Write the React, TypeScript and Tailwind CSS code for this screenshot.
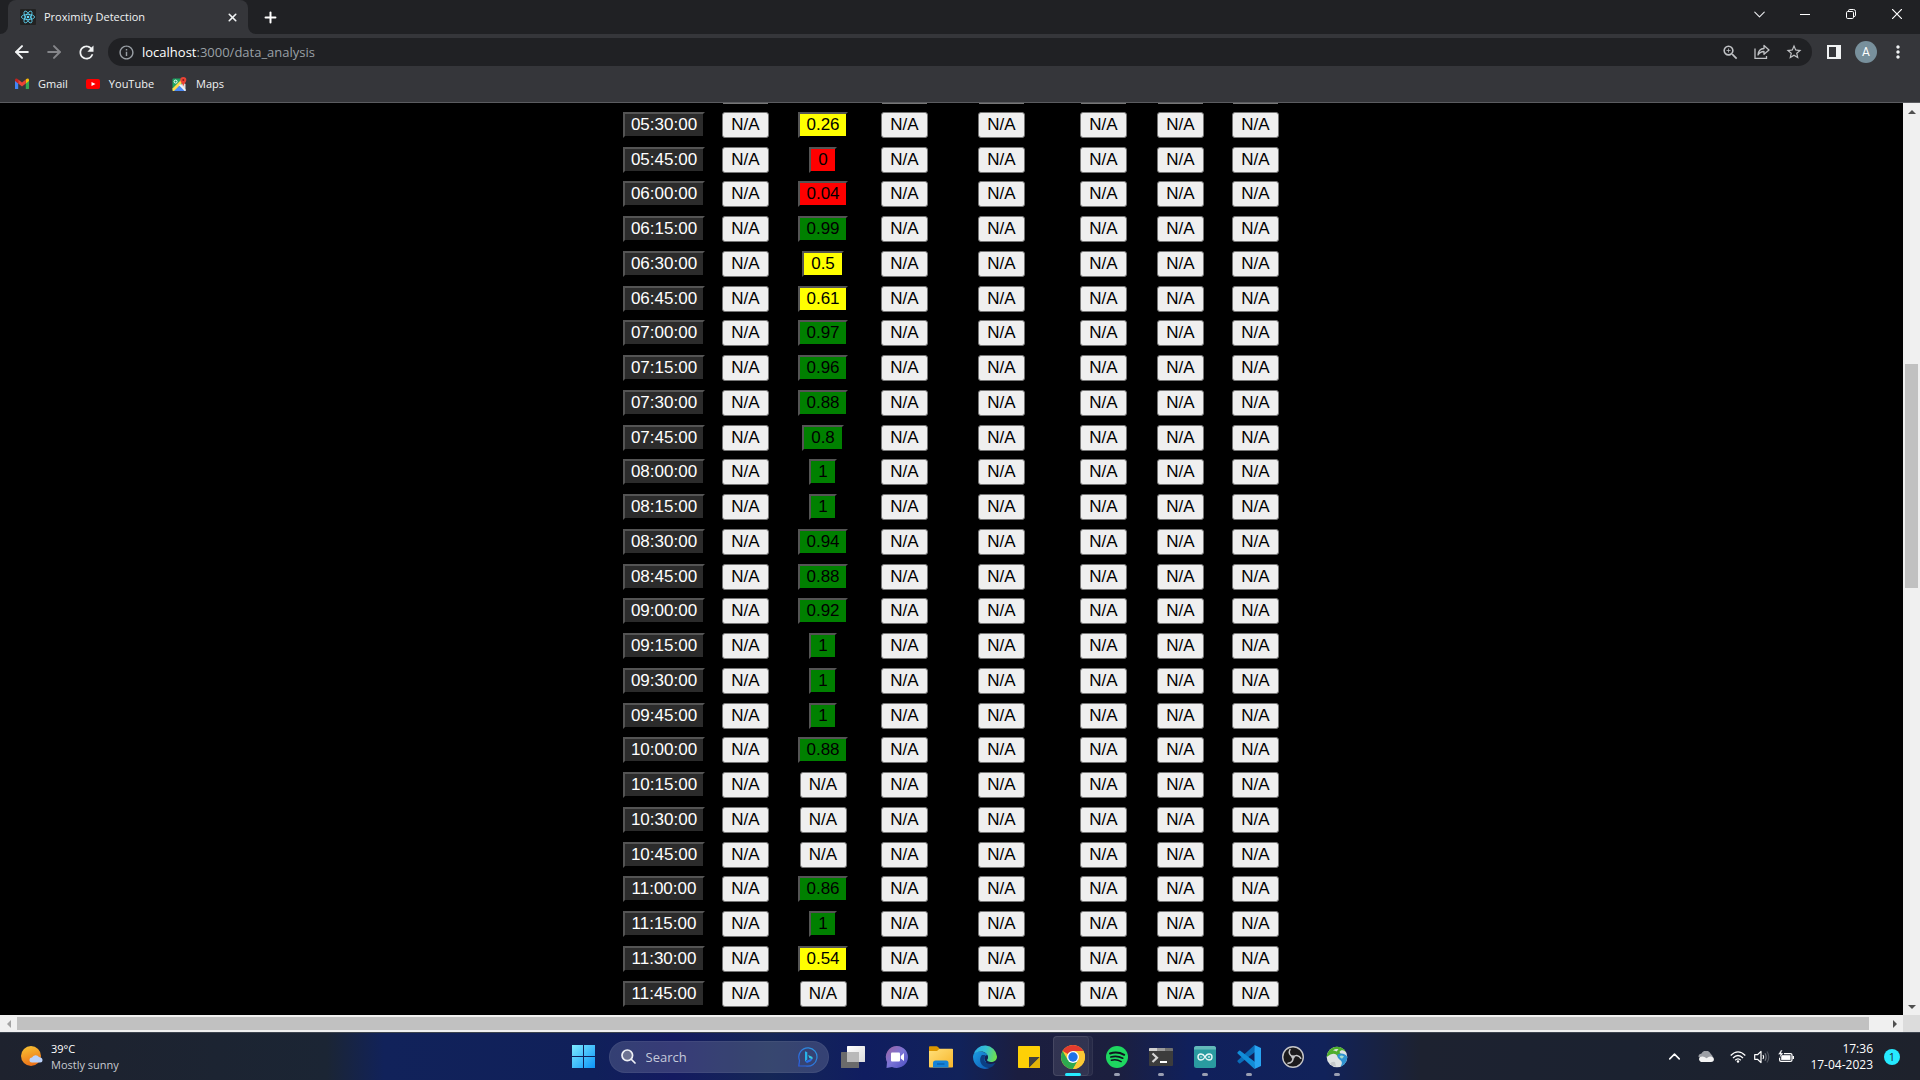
import React from "react";
import { ArrowLeft, ArrowRight, ChevronDown, ChevronUp, Plus, X } from "lucide-react";
import { MdRefresh, MdInfoOutline, MdZoomIn, MdStarBorder, MdMoreVert } from "react-icons/md";

type Reading = { time: string; value: string };

const readings: Reading[] = [
  { time: "05:30:00", value: "0.26" },
  { time: "05:45:00", value: "0" },
  { time: "06:00:00", value: "0.04" },
  { time: "06:15:00", value: "0.99" },
  { time: "06:30:00", value: "0.5" },
  { time: "06:45:00", value: "0.61" },
  { time: "07:00:00", value: "0.97" },
  { time: "07:15:00", value: "0.96" },
  { time: "07:30:00", value: "0.88" },
  { time: "07:45:00", value: "0.8" },
  { time: "08:00:00", value: "1" },
  { time: "08:15:00", value: "1" },
  { time: "08:30:00", value: "0.94" },
  { time: "08:45:00", value: "0.88" },
  { time: "09:00:00", value: "0.92" },
  { time: "09:15:00", value: "1" },
  { time: "09:30:00", value: "1" },
  { time: "09:45:00", value: "1" },
  { time: "10:00:00", value: "0.88" },
  { time: "10:15:00", value: "N/A" },
  { time: "10:30:00", value: "N/A" },
  { time: "10:45:00", value: "N/A" },
  { time: "11:00:00", value: "0.86" },
  { time: "11:15:00", value: "1" },
  { time: "11:30:00", value: "0.54" },
  { time: "11:45:00", value: "N/A" },
];

function toneOf(value: string) {
  const n = Number(value);
  if (n < 0.25) return "bg-[#ff0000]";
  if (n < 0.75) return "bg-[#ffff00]";
  return "bg-[#008000]";
}

function widthOf(value: string) {
  if (value.length === 1) return "w-7";
  if (value.length === 3) return "w-[42px]";
  return "w-[50px]";
}

function ValueButton({ value }: { value: string }) {
  if (value === "N/A") {
    return (
      <button className="mx-auto flex h-[26px] w-[47px] items-center justify-center rounded-[3px] border border-[#767676] bg-[#efefef] text-[17px] leading-5 text-black">
        N/A
      </button>
    );
  }
  return (
    <button
      className={`mx-auto flex h-[26px] items-center justify-center border-2 border-black text-[17px] leading-5 text-black [border-style:outset] ${toneOf(value)} ${widthOf(value)}`}
    >
      {value}
    </button>
  );
}

function ReadingsTable() {
  return (
    <table className="mx-auto w-[680px] shrink-0 table-fixed border-collapse font-['Liberation_Sans',Arial,sans-serif]">
      <colgroup>
        <col className="w-[100px]" />
        <col className="w-[63px]" />
        <col className="w-[92px]" />
        <col className="w-[71px]" />
        <col className="w-[123px]" />
        <col className="w-[81px]" />
        <col className="w-[73px]" />
        <col className="w-[77px]" />
      </colgroup>
      <tbody>
        {/* Bottom edge of the row that is scrolled out of view */}
        <tr aria-hidden="true" className="h-[5px]">
          <th className="p-0" />
          {[0, 1, 2, 3, 4, 5, 6].map((i) => (
            <td key={i} className="p-0 align-top">
              {i !== 1 && <div className="mx-auto h-px w-[45px] bg-[#767676]" />}
            </td>
          ))}
        </tr>
        {readings.map((r) => (
          <tr key={r.time} className="h-[35px] [&:nth-child(4n+3)]:h-[34px]">
            <th scope="row" className="p-0 pt-1 align-top font-normal">
              <button className="mx-auto flex h-[26px] w-[82px] items-center justify-center border-2 border-black bg-[#2b2b2b] text-[17px] leading-5 text-white [border-style:outset]">
                {r.time}
              </button>
            </th>
            {["N/A", r.value, "N/A", "N/A", "N/A", "N/A", "N/A"].map((v, i) => (
              <td key={i} className="p-0 pt-1 align-top">
                <ValueButton value={v} />
              </td>
            ))}
          </tr>
        ))}
      </tbody>
    </table>
  );
}

function ReactLogo() {
  return (
    <svg viewBox="0 0 16 16" className="size-4">
      <rect width="16" height="16" rx="1" fill="#222" />
      <g fill="none" stroke="#61dafb" strokeWidth="0.8">
        <ellipse cx="8" cy="8" rx="6.6" ry="2.6" />
        <ellipse cx="8" cy="8" rx="6.6" ry="2.6" transform="rotate(60 8 8)" />
        <ellipse cx="8" cy="8" rx="6.6" ry="2.6" transform="rotate(120 8 8)" />
      </g>
      <circle cx="8" cy="8" r="1.3" fill="#61dafb" />
    </svg>
  );
}

function TabStrip() {
  return (
    <div className="flex h-[34px] items-stretch bg-[#202124]">
      <div className="flex w-2 items-end bg-[#35363a]">
        <div className="h-full w-2 rounded-br-lg bg-[#202124]" />
      </div>
      <div className="flex w-60 items-center rounded-t-lg bg-[#35363a] pl-3 pr-2">
        <ReactLogo />
        <span className="ml-2 flex-1 text-[11px] leading-4 text-[#f1f3f4]">Proximity Detection</span>
        <button aria-label="Close tab" className="flex size-4 items-center justify-center text-[#f1f3f4]">
          <X size={13} strokeWidth={3} />
        </button>
      </div>
      <div className="w-2 bg-[#35363a]">
        <div className="h-full rounded-bl-lg bg-[#202124]" />
      </div>
      <button aria-label="New tab" className="flex w-7 items-center justify-center text-white">
        <Plus size={17} strokeWidth={2.8} />
      </button>
      <div className="flex-1" />
      <button aria-label="Search tabs" className="flex w-[46px] items-center justify-center pb-1.5 text-[#e8eaed]">
        <ChevronDown size={19} strokeWidth={1.4} />
      </button>
      <button aria-label="Minimize" className="flex w-[46px] items-center justify-center pb-1.5 text-white">
        <svg viewBox="0 0 10 10" className="size-2.5"><path d="M0 5.5h10" stroke="currentColor" /></svg>
      </button>
      <button aria-label="Restore" className="flex w-[46px] items-center justify-center pb-1.5 text-white">
        <svg viewBox="0 0 10 10" className="size-2.5" fill="none" stroke="currentColor">
          <rect x="0.5" y="2.5" width="7" height="7" rx="1.2" />
          <path d="M2.5 2V1.700Q2.500 .5 3.700 .5H7.500Q9.500 .5 9.500 2.500V6.300Q9.500 7.500 8 7.500" />
        </svg>
      </button>
      <button aria-label="Close" className="flex w-[46px] items-center justify-center pb-1.5 text-white">
        <svg viewBox="0 0 10 10" className="size-2.5"><path d="M0 0L10 10M10 0L0 10" stroke="currentColor" strokeWidth="1.2" /></svg>
      </button>
    </div>
  );
}

function Toolbar() {
  return (
    <div className="flex h-9 items-center bg-[#35363a] pl-1.5 pr-1.5">
      <button aria-label="Back" className="flex w-8 justify-center text-[#f1f3f4]"><ArrowLeft size={20} strokeWidth={2.4} /></button>
      <button aria-label="Forward" className="flex w-8 justify-center text-[#85868a]"><ArrowRight size={20} strokeWidth={2.4} /></button>
      <button aria-label="Reload" className="flex w-8 justify-center text-[#f1f3f4]"><MdRefresh size={21} /></button>
      <div className="ml-1.5 flex h-7 flex-1 items-center rounded-full bg-[#202124] pl-2.5 pr-0.5 text-[#c0c2c5]">
        <MdInfoOutline size={17} className="text-[#9aa0a6]" />
        <div className="ml-[7px] flex-1 text-[13px] leading-5">
          <span className="text-white">localhost</span>
          <span className="text-[#9aa0a6]">:3000/data_analysis</span>
        </div>
        <button aria-label="Zoom" className="flex w-8 justify-center"><MdZoomIn size={19} /></button>
        <button aria-label="Share" className="flex w-8 justify-center">
          <svg viewBox="0 0 16 16" className="size-4" fill="none" stroke="currentColor" strokeWidth="1.3">
            <path d="M1 4.500V14.300H12.500V12" />
            <path d="M4 11C4.300 7 6.500 4.700 10 4.500V1.500L15 6L10 10.300V7.500C7.200 7.500 5.500 8.500 4 11Z" strokeLinejoin="round" />
          </svg>
        </button>
        <button aria-label="Bookmark" className="flex w-8 justify-center"><MdStarBorder size={18} /></button>
      </div>
      <button aria-label="Side panel" className="ml-1.5 flex w-8 justify-center">
        <svg viewBox="0 0 14 14" className="size-3.5"><path d="M0 0H14V14H0ZM2 2V12H9V2Z" fill="#f1f3f4" fillRule="evenodd" /></svg>
      </button>
      <button aria-label="Profile" className="flex w-8 justify-center">
        <span className="flex size-[22px] items-center justify-center rounded-full bg-[#78909c] font-[Roboto,sans-serif] text-xs leading-4 text-white">A</span>
      </button>
      <button aria-label="Menu" className="flex w-8 justify-center text-[#f1f3f4]"><MdMoreVert size={20} /></button>
    </div>
  );
}

function Bookmarks() {
  const link = "flex items-center gap-[9px] text-[11px] leading-4 text-[#f1f3f4]";
  return (
    <nav className="flex h-[33px] items-center gap-[18px] border-b border-[#5b5c60] bg-[#35363a] pb-1 pl-[15px]">
      <a href="#gmail" className={link}>
        <svg viewBox="0 0 14 12" className="h-3 w-3.5">
          <path d="M0 2V10.500Q0 11 .6 11H3.200V4.500Z" fill="#4285f4" />
          <path d="M14 2V10.500Q14 11 13.400 11H10.800V4.500Z" fill="#34a853" />
          <path d="M10.800 1.600V5.500L14 3.100V1.700Q13.400 -.2 11.800 .8Z" fill="#fbbc04" />
          <path d="M3.200 5.500V1.600L7 4.400L10.800 1.600V5.500L7 8.400Z" fill="#ea4335" />
          <path d="M0 1.700V3.100L3.200 5.500V1.600L2.200 .8Q.6 -.2 0 1.700Z" fill="#c5221f" />
        </svg>
        Gmail
      </a>
      <a href="#youtube" className={link}>
        <svg viewBox="0 0 14 10" className="h-2.5 w-3.5">
          <rect width="14" height="10" rx="2" fill="#f00" />
          <path d="M5.500 3L9.500 5L5.500 7Z" fill="#fff" />
        </svg>
        YouTube
      </a>
      <a href="#maps" className={link}>
        <svg viewBox="0 0 15 15" className="size-[15px]">
          <path d="M1.500 1.500H12V14H1.500Q.5 14 .5 13V2.500Q.5 1.500 1.500 1.500Z" fill="#1ea362" />
          <path d="M1 14L7.500 7.500L14 14Z" fill="#4a89f3" />
          <path d="M8 8L12 6L13.500 7V13.500Z" fill="#dedede" />
          <path d="M.5 11.500L9 3L10.500 5.500L2 14H1Q.5 14 .5 13Z" fill="#ffd84a" />
          <path d="M7 8.200L8.200 7L14 13L13.300 14H12.700Z" fill="#f5f5f5" />
          <circle cx="3.600" cy="4.600" r="1.500" fill="none" stroke="#fff" />
          <path d="M11.300 0A3 3 0 0 1 14.300 3.200C14.300 5.200 12 6.200 11.300 9.200C10.600 6.200 8.300 5.200 8.300 3.200A3 3 0 0 1 11.300 0Z" fill="#ea4335" />
          <circle cx="11.300" cy="3.100" r="1" fill="#8c1d18" />
        </svg>
        Maps
      </a>
    </nav>
  );
}

function VerticalScrollbar() {
  return (
    <div className="flex w-[17px] flex-col items-center bg-[#f0f0f0]">
      <button aria-label="Scroll up" className="flex h-[17px] w-full items-center justify-center text-[#505050]">
        <svg viewBox="0 0 8 4" className="h-1 w-2"><path d="M0 4L4 0L8 4Z" fill="currentColor" /></svg>
      </button>
      <div className="flex w-[13px] flex-1 flex-col">
        <div className="grow-[244]" />
        <div className="grow-[224] bg-[#c1c1c1]" />
        <div className="grow-[410]" />
      </div>
      <button aria-label="Scroll down" className="flex h-[17px] w-full items-center justify-center text-[#505050]">
        <svg viewBox="0 0 8 4" className="h-1 w-2"><path d="M0 0L4 4L8 0Z" fill="currentColor" /></svg>
      </button>
    </div>
  );
}

function HorizontalScrollbar() {
  return (
    <div className="flex h-[17px] items-center bg-[#f0f0f0]">
      <button aria-label="Scroll left" className="flex h-full w-[17px] items-center justify-center text-[#a3a3a3]">
        <svg viewBox="0 0 4 8" className="h-2 w-1"><path d="M4 0L0 4L4 8Z" fill="currentColor" /></svg>
      </button>
      <div className="h-[13px] flex-1 bg-[#c1c1c1]" />
      <div className="w-[17px]" />
      <button aria-label="Scroll right" className="flex h-full w-[17px] items-center justify-center text-[#505050]">
        <svg viewBox="0 0 4 8" className="h-2 w-1"><path d="M0 0L4 4L0 8Z" fill="currentColor" /></svg>
      </button>
      <div className="h-full w-[17px] bg-[#dcdcdc]" />
    </div>
  );
}

const TaskViewIcon = () => (
  <svg viewBox="0 0 24 22" className="h-[22px] w-6">
    <defs><linearGradient id="tv" x1="0" y1="0" x2="1" y2="1"><stop stopColor="#fff" /><stop offset="1" stopColor="#dcdcdc" /></linearGradient></defs>
    <rect x="6" width="18" height="16" rx="0.6" fill="url(#tv)" />
    <rect y="6" width="18" height="16" rx="0.6" fill="#6b6b6b" />
    <rect x="6" y="6" width="12" height="10" fill="#b9b9b9" />
  </svg>
);

const ChatIcon = () => (
  <svg viewBox="0 0 24 24" className="size-6">
    <defs><linearGradient id="ch" x1="0" y1="0" x2="1" y2="1"><stop stopColor="#a0629f" /><stop offset=".5" stopColor="#7a74d6" /><stop offset="1" stopColor="#4a4cc0" /></linearGradient></defs>
    <path d="M12 1A11.300 11 0 1 1 7 22L1.500 23L2 17A11 11 0 0 1 12 1Z" fill="url(#ch)" />
    <rect x="6" y="7.500" width="9" height="9" rx="1" fill="#fff" />
    <path d="M15.800 11L19 8V16L15.800 13.500Z" fill="#fff" />
  </svg>
);

const FolderIcon = () => (
  <svg viewBox="0 0 24 22" className="h-[22px] w-6">
    <defs><linearGradient id="fo" x1="0" y1="0" x2="1" y2="1"><stop stopColor="#ffe07a" /><stop offset="1" stopColor="#f8b62b" /></linearGradient></defs>
    <path d="M0 1Q0 .3 .8 .3H7.500Q8.300 .3 9 1L10.500 2.500V8H0Z" fill="#dc9600" />
    <path d="M0 5H8L10.500 2.700H23.200Q24 2.700 24 3.500V20.700Q24 21.500 23.200 21.500H.8Q0 21.500 0 20.700Z" fill="url(#fo)" />
    <path d="M4 21.500V17Q4 14.500 6.500 14.500H17Q19.500 14.500 19.500 17V21.500Z" fill="#1683d8" />
    <path d="M8 18H15.500" stroke="#0a5ca8" strokeWidth="1.200" />
  </svg>
);

const EdgeIcon = () => (
  <svg viewBox="0 0 24 24" className="size-6">
    <defs>
      <linearGradient id="e1" x1="0" y1=".3" x2="1" y2=".5"><stop stopColor="#2aa9e8" /><stop offset=".5" stopColor="#35c1d1" /><stop offset="1" stopColor="#6fe04b" /></linearGradient>
      <linearGradient id="e2" x1="0" y1="0" x2="1" y2="1"><stop stopColor="#1b9de2" /><stop offset="1" stopColor="#0f5ab5" /></linearGradient>
    </defs>
    <path d="M0 12C0 8 4 6 8 6.500C12 7 15 9 15 12L12 20L16 23.300A12 12 0 0 1 0 12Z" fill="url(#e2)" />
    <path d="M.3 10A12 12 0 0 1 24 11.500C24 15.500 21 17 18 17C15 17 14 16 14 15C14 14.500 15 14 15 12C15 9 12 6.500 8 6.500C4.500 6.500 1.500 8 .3 10Z" fill="url(#e1)" />
    <path d="M8.500 10.500C6 14 7 19 11 21.500C14 23.500 18 23 20 21C21.500 19.500 22.800 18 22.300 17.800C19.500 19.500 14.500 19.300 12.500 17C10.500 15 11 12 12.500 10.500C11 10 9.500 9.800 8.500 10.500Z" fill="#0c3f83" />
    <path d="M14.500 10.500C13 9.500 11 12 11.500 14C12 16.500 14 18.200 16.500 18.500L17 16.900C15 16.700 14 16 14 15C14 14.500 16 12.500 14.500 10.500Z" fill="#132055" />
  </svg>
);

const StickyIcon = () => (
  <svg viewBox="0 0 22 22" className="size-[22px]">
    <rect width="22" height="22" rx="0.8" fill="#fdd006" />
    <path d="M11 22V11H22Z" fill="#404040" />
    <path d="M11 22L22 11V21.200Q22 22 21.200 22Z" fill="#e3b408" />
  </svg>
);

const ChromeIcon = () => (
  <svg viewBox="0 0 24 24" className="size-6">
    <circle cx="12" cy="12" r="12" fill="#fcc934" />
    <path d="M12 12L1.610 6A12 12 0 0 1 22.390 6H12Z" fill="#e33b2e" />
    <path d="M1.610 6A12 12 0 0 0 12 24L17.200 15L12 12L6.800 15Z" fill="#2da94f" />
    <path d="M17.200 15L12 24A12 12 0 0 0 22.390 6H12Z" fill="#fcc934" />
    <circle cx="12" cy="12" r="6" fill="#fff" />
    <circle cx="12" cy="12" r="4.700" fill="#1f72e8" />
  </svg>
);

const SpotifyIcon = () => (
  <svg viewBox="0 0 22 22" className="size-[22px]">
    <circle cx="11" cy="11" r="11" fill="#1ed760" />
    <g fill="none" stroke="#10131f" strokeLinecap="round">
      <path d="M4 7.500Q11.500 5.200 18.200 8.800" strokeWidth="2" />
      <path d="M4.800 11Q11 9.200 16.800 12.200" strokeWidth="1.700" />
      <path d="M5.400 14.300Q10.500 12.900 15.200 15.600" strokeWidth="1.400" />
    </g>
  </svg>
);

const TerminalIcon = () => (
  <svg viewBox="0 0 24 18" className="h-[18px] w-6">
    <rect width="24" height="18" rx="1" fill="#3c3c3c" />
    <path d="M0 3V1Q0 0 1 0H8V3Z" fill="#d0d0d0" />
    <path d="M8 0H16V3H8Z" fill="#9a9a9a" />
    <path d="M16 0H23Q24 0 24 1V3H16Z" fill="#707070" />
    <path d="M3.500 5.500L8 9.700L3.500 14" fill="none" stroke="#d5d5d5" strokeWidth="2.200" />
    <path d="M11 14H18" stroke="#fff" strokeWidth="2" />
  </svg>
);

const ArduinoIcon = () => (
  <svg viewBox="0 0 22 22" className="size-[22px]">
    <rect width="22" height="22" rx="2.500" fill="#2a9ba0" />
    <path d="M0 3.500V2.500Q0 0 2.500 0H19.500Q22 0 22 2.500V3.500Z" fill="#63b9ba" />
    <path d="M11 11C9.800 8.900 8.700 8 7 8A3 3 0 0 0 7 14C8.700 14 9.800 13.100 11 11C12.200 8.900 13.300 8 15 8A3 3 0 0 1 15 14C13.300 14 12.200 13.100 11 11Z" fill="none" stroke="#e9f6f6" strokeWidth="1.400" />
    <path d="M6 11H8.200M13.900 11H16.100M15 9.900V12.100" stroke="#e9f6f6" strokeWidth=".8" />
  </svg>
);

const CodeIcon = () => (
  <svg viewBox="0 0 24 24" className="size-6">
    <path d="M17.500 0L.6 15.500Q0 16.200 .6 16.800L2 18.200Q2.600 18.600 3.300 18.200L18 7Z" fill="#0a6cb8" />
    <path d="M17.500 24L.6 8.500Q0 7.800 .6 7.200L2 5.800Q2.600 5.400 3.300 5.800L18 17Z" fill="#118dd8" />
    <path d="M17.500 0L24 3V21L17.500 24Z" fill="#27a4f2" />
  </svg>
);

const ObsIcon = () => (
  <svg viewBox="0 0 22 22" className="size-[22px]">
    <circle cx="11" cy="11" r="10.300" fill="#1b1a1c" stroke="#c6c6c8" strokeWidth="1.400" />
    <g fill="none" stroke="#c6c6c8" strokeWidth="1.500" strokeLinecap="round">
      <path d="M11 11C7.500 9.500 6.300 6.500 8 3.500" />
      <path d="M11 11C14 8.800 17.300 9.200 18.800 12.300" />
      <path d="M11 11C11.500 14.700 9.500 17.300 6 17.300" />
    </g>
    <circle cx="11" cy="11" r="1.800" fill="#c6c6c8" />
  </svg>
);

const GlobeIcon = () => (
  <svg viewBox="0 0 22 22" className="size-[22px]">
    <circle cx="11" cy="11" r="10.300" fill="#dfe3e2" />
    <path d="M.7 11C.9 7 3.500 2.500 8 1.200C13 -.2 18 2 20 6C17 3.500 14.500 4 13.500 6L15.500 9L12 11C10 6.500 6 6.500 .7 11Z" fill="#4fae2c" />
    <path d="M7 4.500Q9.500 2.500 12.500 3.200L10.500 5.500Q9 4.500 7 4.500Z" fill="#dfe3e2" />
    <path d="M11.500 8.500C15.500 6.500 20 8 21.300 11C21 15.500 18.500 19.500 14.500 20.700C16.500 17.500 16.500 15.500 13.500 13.500C12 12.500 11 10.500 11.500 8.500Z" fill="#2e93d1" />
    <path d="M13.500 10Q16 8.800 18 10.500L16 12.800Q14 12 13.500 10Z" fill="#a5dccb" />
    <path d="M4 18Q5.500 15 9 16L10 20.500Q6.500 20.500 4 18Z" fill="#c6cacb" />
  </svg>
);

const BingIcon = () => (
  <svg viewBox="0 0 20 20" className="size-5" fill="none">
    <defs><linearGradient id="bi" x1="0" y1="1" x2="1" y2="0"><stop stopColor="#2b5de0" /><stop offset="1" stopColor="#2c9be0" /></linearGradient></defs>
    <path d="M10.500 .8A9.200 9.200 0 1 1 8 19H.8L1.500 13.500A9.200 9.200 0 0 1 10.500 .8Z" stroke="url(#bi)" strokeWidth="1.200" />
    <path d="M7 4.300L9.300 5.200V12.500L7 14.500Z" fill="#27b3e8" />
    <path d="M7 14.500L14.500 11Q14.500 13.500 12.500 14.500L9 16Z" fill="#2a6fe8" />
    <path d="M10.200 8L14.500 10V12.300L11.300 11Z" fill="#35c6e0" />
  </svg>
);

const apps: { name: string; icon: React.ReactNode; state?: "open" | "active" }[] = [
  { name: "Task view", icon: <TaskViewIcon /> },
  { name: "Chat", icon: <ChatIcon /> },
  { name: "File Explorer", icon: <FolderIcon /> },
  { name: "Edge", icon: <EdgeIcon /> },
  { name: "Sticky Notes", icon: <StickyIcon /> },
  { name: "Chrome", icon: <ChromeIcon />, state: "active" },
  { name: "Spotify", icon: <SpotifyIcon />, state: "open" },
  { name: "Terminal", icon: <TerminalIcon />, state: "open" },
  { name: "Arduino IDE", icon: <ArduinoIcon />, state: "open" },
  { name: "Visual Studio Code", icon: <CodeIcon />, state: "open" },
  { name: "OBS Studio", icon: <ObsIcon /> },
  { name: "Network", icon: <GlobeIcon />, state: "open" },
];

function Taskbar() {
  return (
    <footer className="grid h-12 grid-cols-[1fr_auto_1fr] items-center border-t border-[#3d444f] bg-[linear-gradient(90deg,#1e222e_0%,#1b2534_17%,#11225a_20%,#10205a_31%,#141a60_35%,#152756_40%,#101d60_45%,#11225a_50%,#1b1e40_53%,#1c1f3e_58%,#10205c_62%,#11225a_69%,#1d2230_74%,#1b2230_85%,#1e222c_100%)] text-xs leading-4">
      <button className="flex items-center gap-[7px] justify-self-start pl-5 text-left text-[11px] leading-4">
        <svg viewBox="0 0 24 24" className="size-6">
          <defs><linearGradient id="sun" x1=".3" y1="0" x2=".6" y2="1"><stop stopColor="#f8c032" /><stop offset="1" stopColor="#ec6e17" /></linearGradient></defs>
          <circle cx="11" cy="11" r="10" fill="url(#sun)" />
          <path d="M12 17.500A2.500 2.500 0 0 1 12 12.500A4 4 0 0 1 19 12Q22.500 12.500 22.500 15Q22.500 17.500 20 17.500Z" fill="#bcd3fa" />
        </svg>
        <span className="flex flex-col text-[#c8cad0]">
          <span className="text-white">39°C</span>
          <span>Mostly sunny</span>
        </span>
      </button>

      <div className="flex items-center">
        <button aria-label="Start" className="flex size-11 items-center justify-center">
          <svg viewBox="0 0 23 23" className="size-[23px]">
            <defs><linearGradient id="win" gradientUnits="userSpaceOnUse" x1="0" y1="0" x2="23" y2="23"><stop stopColor="#7deaff" /><stop offset="1" stopColor="#0c95f8" /></linearGradient></defs>
            <path d="M0 0H11V11H0ZM12 0H23V11H12ZM0 12H11V23H0ZM12 12H23V23H12Z" fill="url(#win)" />
          </svg>
        </button>
        <label className="ml-[3px] mr-0.5 flex h-8 w-[220px] items-center rounded-full border border-white/5 bg-white/15 pl-[11px] pr-2.5">
          <svg viewBox="0 0 15 15" className="size-[15px]" fill="none" stroke="#eef0f5" strokeWidth="1.700" strokeLinecap="round">
            <circle cx="6.300" cy="6.300" r="5.300" fill="#6d7392" />
            <path d="M10.500 10.500L14 14" />
          </svg>
          <input aria-label="Search" placeholder="Search" className="ml-2.5 w-0 flex-1 bg-transparent text-[13px] leading-4 outline-none placeholder:text-[#c5c9da]" />
          <BingIcon />
        </label>
        {apps.map((a) => (
          <button key={a.name} aria-label={a.name} className="relative flex h-[47px] w-11 items-center justify-center">
            {a.state === "active" && (
              <>
                <span className="absolute left-0.5 top-[3px] h-10 w-10 rounded-[4px] border border-white/5 bg-white/5" />
                <span className="absolute left-0.5 top-[3px] h-10 w-9 rounded-[4px] border border-white/5 bg-white/5" />
                <span className="absolute bottom-1 left-3.5 h-[3px] w-4 rounded-full bg-[#26eaff]" />
              </>
            )}
            {a.state === "open" && <span className="absolute bottom-1 h-[3px] w-1.5 rounded-full bg-[#9a9fb2]" />}
            <span className="relative">{a.icon}</span>
          </button>
        ))}
      </div>

      <div className="flex items-center justify-self-end pr-5 text-white">
        <button aria-label="Show hidden icons" className="flex w-8 justify-center"><ChevronUp size={19} strokeWidth={2} /></button>
        <button aria-label="OneDrive" className="flex w-8 justify-center">
          <svg viewBox="0 0 16 11" className="h-[11px] w-4">
            <path d="M.5 6A3.500 3.500 0 0 1 3.500 2.500A5 5 0 0 1 12.500 2.500L15 5.500L8 8Z" fill="#9c9fa5" />
            <path d="M3 11A3 3 0 0 1 2 6Q4.500 4.800 6.500 6L8.500 7.200L11 5.800Q13.500 4.800 15.500 6.800Q17 10.500 13 11Z" fill="#f3f3f3" />
          </svg>
        </button>
        <button aria-label="Network, volume and battery" className="flex items-center justify-center gap-2 pl-2 pr-4">
          <svg viewBox="0 0 16 12" className="h-3 w-4" fill="none" stroke="#fff" strokeWidth="1.300">
            <path d="M.7 4.500Q8 -2.800 15.300 4.500" /><path d="M3 7Q8 2 13 7" /><path d="M5.200 9.200Q8 6.500 10.800 9.200" />
            <circle cx="8" cy="10.500" r="1.200" fill="#fff" stroke="none" />
          </svg>
          <svg viewBox="0 0 16 14" className="h-3.5 w-4" fill="none" stroke="#fff" strokeWidth="1.200">
            <path d="M.7 4.700H3.500L7 1.400V12.600L3.500 9.300H.7Z" strokeLinejoin="round" />
            <path d="M9 5Q10.300 7 9 9" /><path d="M11 3.200Q13.300 7 11 10.800" stroke="#747880" /><path d="M13 1.500Q16.500 7 13 12.500" stroke="#50555f" />
          </svg>
          <svg viewBox="0 0 16 13" className="h-[13px] w-4">
            <path d="M6 3.600H12.500Q14 3.600 14 5V10Q14 11.400 12.500 11.400H3Q1.600 11.400 1.600 10V7.500" fill="none" stroke="#fff" strokeWidth="1.200" />
            <rect x="3.200" y="5.200" width="9.300" height="4.700" fill="#fff" /><path d="M14.500 6H16V9H14.500Z" fill="#fff" />
            <path d="M3 0L0 4.500H2.300L1.500 8L5.500 3H3.200L4.500 0Z" fill="#fff" stroke="#1c2230" strokeWidth=".4" />
          </svg>
        </button>
        <button className="flex flex-col text-right">
          <span>17:36</span>
          <span>17-04-2023</span>
        </button>
        <button aria-label="1 notification" className="ml-[11px] flex size-4 items-center justify-center rounded-full bg-[#26eaff] text-[11px] leading-4 text-[#1c2b38]">1</button>
      </div>
    </footer>
  );
}

export default function App() {
  return (
    <div className="flex h-screen flex-col overflow-hidden bg-black font-['Open_Sans','Noto_Sans',sans-serif]">
      <header>
        <TabStrip />
        <Toolbar />
        <Bookmarks />
      </header>
      <div className="flex min-h-0 flex-1">
        <main className="min-w-0 flex-1 overflow-hidden bg-black pl-[5px]">
          <ReadingsTable />
        </main>
        <VerticalScrollbar />
      </div>
      <HorizontalScrollbar />
      <Taskbar />
    </div>
  );
}
